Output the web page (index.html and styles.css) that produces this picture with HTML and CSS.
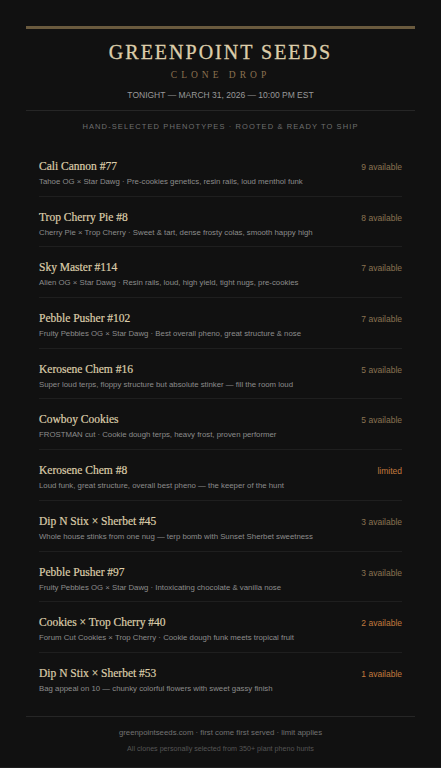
FILE: index.html
```html
<!DOCTYPE html>
<html lang="en">
<head>
<meta charset="utf-8">
<title>Greenpoint Seeds — Clone Drop</title>
<link rel="stylesheet" href="styles.css">
</head>
<body>
<div class="page">
  <div class="bar"></div>
  <header class="header">
    <h1 class="brand">GREENPOINT SEEDS</h1>
    <div class="sub">CLONE DROP</div>
    <div class="when">TONIGHT — MARCH 31, 2026 — 10:00 PM EST</div>
  </header>
  <div class="tagline">HAND-SELECTED PHENOTYPES · ROOTED &amp; READY TO SHIP</div>
  <ul class="list">
    <li class="item"><div class="row"><span class="name">Cali Cannon #77</span><span class="avail">9 available</span></div><div class="desc">Tahoe OG × Star Dawg · Pre-cookies genetics, resin rails, loud menthol funk</div></li>
    <li class="item"><div class="row"><span class="name">Trop Cherry Pie #8</span><span class="avail">8 available</span></div><div class="desc">Cherry Pie × Trop Cherry · Sweet &amp; tart, dense frosty colas, smooth happy high</div></li>
    <li class="item"><div class="row"><span class="name">Sky Master #114</span><span class="avail">7 available</span></div><div class="desc">Alien OG × Star Dawg · Resin rails, loud, high yield, tight nugs, pre-cookies</div></li>
    <li class="item"><div class="row"><span class="name">Pebble Pusher #102</span><span class="avail">7 available</span></div><div class="desc">Fruity Pebbles OG × Star Dawg · Best overall pheno, great structure &amp; nose</div></li>
    <li class="item"><div class="row"><span class="name">Kerosene Chem #16</span><span class="avail">5 available</span></div><div class="desc">Super loud terps, floppy structure but absolute stinker — fill the room loud</div></li>
    <li class="item"><div class="row"><span class="name">Cowboy Cookies</span><span class="avail">5 available</span></div><div class="desc">FROSTMAN cut · Cookie dough terps, heavy frost, proven performer</div></li>
    <li class="item"><div class="row"><span class="name">Kerosene Chem #8</span><span class="avail hot">limited</span></div><div class="desc">Loud funk, great structure, overall best pheno — the keeper of the hunt</div></li>
    <li class="item"><div class="row"><span class="name">Dip N Stix × Sherbet #45</span><span class="avail">3 available</span></div><div class="desc">Whole house stinks from one nug — terp bomb with Sunset Sherbet sweetness</div></li>
    <li class="item"><div class="row"><span class="name">Pebble Pusher #97</span><span class="avail">3 available</span></div><div class="desc">Fruity Pebbles OG × Star Dawg · Intoxicating chocolate &amp; vanilla nose</div></li>
    <li class="item"><div class="row"><span class="name">Cookies × Trop Cherry #40</span><span class="avail hot">2 available</span></div><div class="desc">Forum Cut Cookies × Trop Cherry · Cookie dough funk meets tropical fruit</div></li>
    <li class="item"><div class="row"><span class="name">Dip N Stix × Sherbet #53</span><span class="avail hot">1 available</span></div><div class="desc">Bag appeal on 10 — chunky colorful flowers with sweet gassy finish</div></li>
  </ul>
  <footer class="footer">
    <div class="foot1">greenpointseeds.com · first come first served · limit applies</div>
    <div class="foot2">All clones personally selected from 350+ plant pheno hunts</div>
  </footer>
</div>
</body>
</html>
```
FILE: styles.css
```css
html, body {
  margin: 0;
  padding: 0;
  background: #1e1e1e;
}
.page {
  background: #111111;
  padding: 26px 26px 0;
  height: 741px;
  font-family: "Liberation Sans", Arial, sans-serif;
}
.bar {
  height: 3px;
  background: #6a5a3e;
}
.header {
  text-align: center;
  padding: 11px 0 9px;
  border-bottom: 1px solid #262626;
}
.brand {
  margin: 0;
  font-family: "Liberation Serif", "Times New Roman", serif;
  font-weight: normal;
  font-size: 20px;
  line-height: 24px;
  letter-spacing: 2px;
  color: #dccdaa;
  -webkit-text-stroke: 0.3px #dccdaa;
}
.sub {
  margin-top: 5px;
  font-family: "Liberation Serif", "Times New Roman", serif;
  font-size: 9.5px;
  line-height: 12px;
  letter-spacing: 4px;
  color: #8a7050;
}
.when {
  margin-top: 8px;
  font-size: 8.5px;
  line-height: 12px;
  color: #999999;
}
.tagline {
  padding-top: 10px;
  text-align: center;
  font-size: 7.5px;
  line-height: 12px;
  letter-spacing: 1.1px;
  color: #6e6e6e;
}
.list {
  list-style: none;
  margin: 13px 0 0;
  padding: 0 13px;
}
.item {
  padding: 12px 0 7.7px;
  border-bottom: 1px solid #1f1f1f;
}
.item:last-child {
  border-bottom: none;
}
.row {
  display: flex;
  justify-content: space-between;
  align-items: baseline;
  height: 16px;
}
.name {
  font-family: "Liberation Serif", "Times New Roman", serif;
  font-size: 11.5px;
  line-height: 16px;
  color: #dccdaa;
  -webkit-text-stroke: 0.2px #dccdaa;
}
.avail {
  font-size: 8.5px;
  color: #8a7352;
}
.avail.hot {
  color: #c27a3e;
}
.desc {
  margin-top: 2px;
  font-size: 7.8px;
  line-height: 12px;
  color: #8c8c8c;
}
.footer {
  margin-top: 13px;
  border-top: 1px solid #262626;
  text-align: center;
  padding-top: 10px;
}
.foot1 {
  font-size: 7.8px;
  line-height: 12px;
  color: #727272;
}
.foot2 {
  margin-top: 4px;
  font-size: 7.15px;
  line-height: 12px;
  color: #555555;
}
```
